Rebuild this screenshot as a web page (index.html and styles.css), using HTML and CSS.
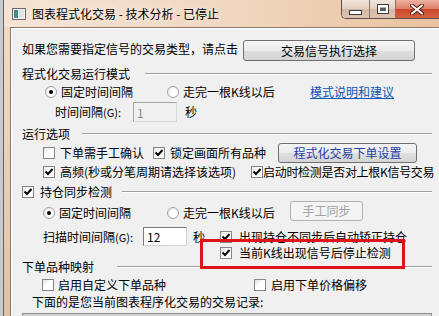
FILE: index.html
```html
<!DOCTYPE html>
<html lang="zh-CN">
<head>
    <meta charset="UTF-8">
    <title>图表程式化交易 - 技术分析 - 已停止</title>
    <link rel="stylesheet" href="styles.css">
</head>
<body>
    <div class="window">
        <div class="titlebar">
            <svg class="app-icon" width="14" height="12" viewBox="0 0 14 12">
                <rect x="0.5" y="0.5" width="13" height="11" fill="#f2f2f2" stroke="#6b6b6b"/>
                <rect x="2" y="2" width="4" height="8" fill="#3f8d8f"/>
                <rect x="7" y="2" width="5" height="8" fill="#dfe3e6"/>
            </svg>
            <span class="title">图表程式化交易 - 技术分析 - 已停止</span>
            <div class="caption">
                <span class="cap cap-min">
                    <svg width="13" height="5" viewBox="0 0 13 5"><rect x="0.5" y="0.5" width="12" height="4" fill="#fff" stroke="#3b3b3b"/></svg>
                </span>
                <span class="cap cap-max">
                    <svg width="12" height="10" viewBox="0 0 12 10"><rect x="0.5" y="0.5" width="11" height="9" fill="#fff" stroke="#3b3b3b"/><rect x="3" y="3.5" width="6" height="3.5" fill="#5a5a5a"/></svg>
                </span>
                <span class="cap cap-close">
                    <svg width="14" height="11" viewBox="0 0 14 11"><path d="M2 1.5 L12 9.5 M12 1.5 L2 9.5" stroke="#4a1a10" stroke-width="4" stroke-linecap="round"/><path d="M2 1.5 L12 9.5 M12 1.5 L2 9.5" stroke="#fff" stroke-width="2.2" stroke-linecap="round"/></svg>
                </span>
            </div>
        </div>

        <div class="client">
            <div class="row row-intro">
                <span class="intro-text">如果您需要指定信号的交易类型，请点击</span>
                <button class="btn btn-signal" type="button">交易信号执行选择</button>
            </div>

            <div class="group-head gh-mode">
                <span class="gh-label">程式化交易运行模式</span>
                <span class="rule"></span>
            </div>
            <div class="row row-mode">
                <label class="opt opt-fixed"><span class="radio"><span class="dot"></span></span>固定时间间隔</label>
                <label class="opt opt-bar"><span class="radio"></span>走完一根K线以后</label>
                <a class="link" href="#">模式说明和建议</a>
            </div>
            <div class="row row-interval">
                <span class="field-label fl-interval">时间间隔<span class="key">(G):</span></span>
                <input class="field" type="text" value="1" disabled>
                <span class="unit">秒</span>
            </div>

            <div class="group-head gh-opts">
                <span class="gh-label">运行选项</span>
                <span class="rule"></span>
            </div>
            <div class="row row-opts1">
                <label class="opt opt-confirm"><span class="box"></span>下单需手工确认</label>
                <label class="opt opt-lock"><span class="box"><svg width="10" height="10" viewBox="0 0 10 10"><path d="M1.5 4.5 L4 7 L8.5 2" fill="none" stroke="#000" stroke-width="1.9"/></svg></span>锁定画面所有品种</label>
                <button class="btn btn-order" type="button">程式化交易下单设置</button>
            </div>
            <div class="row row-opts2">
                <label class="opt opt-hf"><span class="box"><svg width="10" height="10" viewBox="0 0 10 10"><path d="M1.5 4.5 L4 7 L8.5 2" fill="none" stroke="#000" stroke-width="1.9"/></svg></span>高频(秒或分笔周期请选择该选项)</label>
                <label class="opt opt-tight"><span class="box"><svg width="10" height="10" viewBox="0 0 10 10"><path d="M1.5 4.5 L4 7 L8.5 2" fill="none" stroke="#000" stroke-width="1.9"/></svg></span>启动时检测是否对上根K信号交易</label>
            </div>

            <div class="group-head gh-sync">
                <label class="gh-label opt opt-head"><span class="box"><svg width="10" height="10" viewBox="0 0 10 10"><path d="M1.5 4.5 L4 7 L8.5 2" fill="none" stroke="#000" stroke-width="1.9"/></svg></span>持仓同步检测</label>
                <span class="rule"></span>
            </div>
            <div class="row row-sync">
                <label class="opt opt-fixed2"><span class="radio"><span class="dot"></span></span>固定时间间隔</label>
                <label class="opt opt-bar2"><span class="radio"></span>走完一根K线以后</label>
                <button class="btn btn-manual" type="button" disabled>手工同步</button>
            </div>
            <div class="row row-scan">
                <span class="field-label fl-scan">扫描时间间隔<span class="key">(G):</span></span>
                <input class="field" type="text" value="12">
                <span class="unit unit-scan">秒</span>
                <label class="opt opt-fix"><span class="box"><svg width="10" height="10" viewBox="0 0 10 10"><path d="M1.5 4.5 L4 7 L8.5 2" fill="none" stroke="#000" stroke-width="1.9"/></svg></span>出现持仓不同步后自动矫正持仓</label>
            </div>
            <div class="row row-stop">
                <label class="opt opt-fix"><span class="box"><svg width="10" height="10" viewBox="0 0 10 10"><path d="M1.5 4.5 L4 7 L8.5 2" fill="none" stroke="#000" stroke-width="1.9"/></svg></span>当前K线出现信号后停止检测</label>
            </div>

            <div class="group-head gh-map">
                <span class="gh-label">下单品种映射</span>
                <span class="rule"></span>
            </div>
            <div class="row row-map">
                <label class="opt opt-custom"><span class="box"></span>启用自定义下单品种</label>
                <label class="opt"><span class="box"></span>启用下单价格偏移</label>
            </div>
            <div class="row row-record">下面的是您当前图表程序化交易的交易记录:</div>
            <div class="record-list"></div>
        </div>

        <div class="highlight"></div>
    </div>
</body>
</html>
```

FILE: styles.css
```css
/* Win7 style dialog */
body {
    margin: 0;
    width: 439px;
    height: 316px;
    overflow: hidden;
    background: #c6cbd1;
    font-family: "Noto Sans CJK SC", "Noto Sans", sans-serif;
    font-size: 12px;
    line-height: 16px;
    color: #000;
}
.window {
    position: relative;
    margin-left: 3px;
    width: 436px;
    height: 316px;
    box-sizing: border-box;
    border-left: 1px solid #6f6055;
    background: linear-gradient(180deg, #f0dcc8, #e6d0bb 55%, #dcc2a8);
}
.titlebar {
    display: flex;
    align-items: center;
    height: 27px;
    padding-left: 8px;
    background: linear-gradient(90deg, #f5e4d5, #f0d6bf 55%, #eac29f);
}
.app-icon {
    flex: none;
}
.title {
    margin-left: 6px;
    text-shadow: 0 0 6px rgba(255, 255, 255, 0.9);
}
.caption {
    display: flex;
    align-self: flex-start;
    margin-left: auto;
    height: 18px;
    border: 1px solid #5f5047;
    border-top: 0;
    border-right: 0;
    border-radius: 0 0 0 5px;
    overflow: hidden;
}
.cap {
    display: flex;
    align-items: center;
    justify-content: center;
    height: 18px;
    background: linear-gradient(#f3e6dc, #e4cebe 50%, #d5b8a4 51%, #dec4b1);
}
.cap-min {
    width: 27px;
    border-right: 1px solid #84746a;
}
.cap-min svg {
    margin-top: 6px;
}
.cap-max {
    width: 25px;
    border-right: 1px solid #84746a;
}
.cap-close {
    width: 41px;
    padding-right: 2px;
    background: linear-gradient(#eeb1a1, #dd7f68 50%, #c8472c 51%, #d6623f);
}
.client {
    margin-left: 6px;
    height: 289px;
    box-sizing: border-box;
    padding-left: 11px;
    border: 1px solid #8a786a;
    border-right: 0;
    border-bottom: 0;
    background: #f0f0f0;
    box-shadow: inset 1px 1px 0 #fff;
}
.row {
    display: flex;
    align-items: center;
    width: 410px;
    box-sizing: border-box;
    white-space: nowrap;
}
.row-intro {
    margin-top: 12px;
    height: 21px;
}
.intro-text {
    width: 221px;
    margin-bottom: 4px;
}
.group-head {
    display: flex;
    align-items: center;
    width: 410px;
    height: 14px;
    white-space: nowrap;
}
.gh-label {
    flex: none;
}
.rule {
    flex: 1;
    border-top: 1px solid #a0a0a0;
    border-bottom: 1px solid #fff;
}
.gh-mode {
    margin-top: 6px;
}
.gh-mode .gh-label {
    width: 123px;
}
.row-mode {
    margin-top: 3px;
    height: 16px;
    padding-left: 23px;
}
.row-interval {
    margin-top: 2px;
    height: 20px;
    padding-left: 33px;
}
.gh-opts {
    margin-top: 5px;
}
.gh-opts .gh-label {
    width: 60px;
}
.row-opts1 {
    margin-top: 2px;
    height: 20px;
    padding-left: 21px;
}
.row-opts2 {
    margin-top: 1px;
    height: 16px;
    padding-left: 21px;
}
.gh-sync {
    margin-top: 5px;
}
.gh-sync .gh-label {
    width: 100px;
}
.row-sync {
    margin-top: 2px;
    height: 20px;
    padding-left: 21px;
    align-items: flex-end;
}
.row-scan {
    margin-top: 6px;
    height: 19px;
    padding-left: 21px;
}
.row-stop {
    height: 14px;
    padding-left: 198px;
}
.gh-map .gh-label {
    width: 95px;
}
.row-map {
    margin-top: 3px;
    height: 16px;
    padding-left: 20px;
}
.row-record {
    margin-top: 1px;
    height: 16px;
    padding-left: 10px;
}
.record-list {
    margin-top: 3px;
    width: 410px;
    height: 10px;
    box-sizing: border-box;
    border: 1px solid #8e8e8e;
    background: linear-gradient(#d0d0d0, #e6e6e6);
}

/* options */
.opt {
    display: flex;
    align-items: center;
    gap: 5px;
    flex: none;
    height: 16px;
}
.opt-fixed {
    width: 122px;
    gap: 4px;
}
.opt-bar {
    width: 143px;
    gap: 4px;
}
.opt-confirm {
    width: 110px;
}
.opt-lock {
    width: 125px;
}
.opt-hf {
    width: 208px;
}
.opt-tight {
    gap: 0;
    letter-spacing: -0.3px;
}
.opt-head {
    gap: 6px;
}
.opt-fixed2 {
    width: 124px;
    gap: 4px;
}
.opt-bar2 {
    width: 123px;
    gap: 4px;
}
.opt-fix {
    gap: 7px;
}
.unit-scan + .opt-fix {
    margin-left: 15px;
}
.opt-custom {
    width: 212px;
    gap: 4px;
}
.box {
    display: flex;
    align-items: center;
    justify-content: center;
    flex: none;
    width: 12px;
    height: 12px;
    box-sizing: border-box;
    border: 1px solid #858585;
    background: linear-gradient(135deg, #e2e2e2, #fff 45%);
}
.radio {
    display: flex;
    align-items: center;
    justify-content: center;
    flex: none;
    width: 12px;
    height: 12px;
    box-sizing: border-box;
    border: 1px solid #a3a3a3;
    border-radius: 50%;
    background: radial-gradient(circle at 60% 60%, #fff 40%, #dcdcdc);
}
.dot {
    width: 4px;
    height: 4px;
    border-radius: 50%;
    background: #000;
}
.link {
    color: #0d56b4;
    text-decoration: underline;
}

/* fields */
.field-label {
    flex: none;
}
.fl-interval {
    width: 78px;
}
.fl-scan {
    width: 100px;
}
.key {
    font-size: 11px;
}
.field {
    box-sizing: border-box;
    width: 44px;
    height: 20px;
    padding: 0 3px;
    border: 1px solid;
    border-color: #7b7b7b #d3d3d3 #d3d3d3 #7b7b7b;
    background: #fff;
    color: #000;
    font: inherit;
}
.row-scan .field {
    height: 19px;
}
.field:disabled {
    background: #f0f0f0;
    color: #8c8c8c;
    border-color: #a5a5a5 #d8d8d8 #d8d8d8 #a5a5a5;
}
.unit {
    margin-left: 8px;
}
.unit-scan {
    margin-left: 6px;
}

/* buttons */
.btn {
    flex: none;
    height: 21px;
    padding: 0;
    border: 1px solid #707070;
    border-radius: 3px;
    background: linear-gradient(#f4f4f4, #ececec 50%, #dfdfdf 51%, #d4d4d4);
    color: #000;
    font: inherit;
    line-height: 18px;
}
.btn-signal {
    width: 172px;
}
.btn-order {
    width: 139px;
    height: 20px;
    color: #1f3fa6;
}
.btn-manual {
    width: 73px;
    height: 20px;
    border-color: #adb2b5;
    background: #f4f4f4;
    color: #a3a3a3;
}

/* red highlight drawn over the dialog */
.highlight {
    position: absolute;
    left: 196px;
    top: 239px;
    width: 199px;
    height: 24px;
    border: 3px solid #e0121c;
}
```
